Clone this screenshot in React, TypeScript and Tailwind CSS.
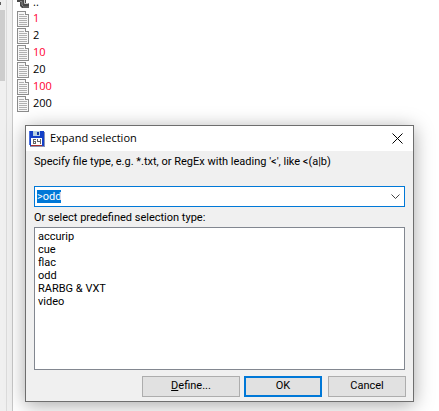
import React, { useEffect, useRef } from "react";

const files = [
  { name: "1", marked: true },
  { name: "2", marked: false },
  { name: "10", marked: true },
  { name: "20", marked: false },
  { name: "100", marked: true },
  { name: "200", marked: false },
];

const presets = ["accurip", "cue", "flac", "odd", "RARBG & VXT", "video"];

const FileIcon = () => (
  <svg width="12" height="16" viewBox="0 0 12 16" shapeRendering="crispEdges" aria-hidden="true">
    <path d="M0.5 0.5H8.5L11.5 3.5V15.5H0.5Z" fill="#f7f7f7" stroke="#8c8c8c" />
    <path d="M8.5 0.5V3.5H11.5" fill="#fff" stroke="#8c8c8c" />
    <path d="M2 3.5H7M2 5.5H10M2 7.5H10M2 9.5H10M2 11.5H10M2 13.5H10" stroke="#b0b0b0" />
  </svg>
);

// only the lower part of the arrow shows, the list is scrolled
const UpIcon = () => (
  <svg width="12" height="10" viewBox="0 0 12 10" aria-hidden="true">
    <path d="M0 0H9V3H12V8H5L3 6V2H0Z" fill="#484848" />
    <path d="M3 1.5H5V5L6.5 6.5" fill="none" stroke="#999" strokeWidth="0.8" />
    <path d="M7.5 0V3.5H11.5" fill="none" stroke="#c8c8c8" />
    <path d="M6 7H12" stroke="#777" />
  </svg>
);

const DiskIcon = () => (
  <svg width="16" height="16" viewBox="0 0 16 16" shapeRendering="crispEdges" aria-hidden="true">
    <path d="M0 0H14L15 1V15H1L0 14Z" fill="#1440c8" />
    <path d="M15 1V15H1" fill="none" stroke="#8c94b4" />
    <path d="M0 0H1V14H0Z" fill="#4a70e0" />
    <path d="M4 0H11V5H4Z" fill="#b8d0e0" />
    <path d="M8 1H10V4H8Z" fill="#1238a8" />
    <path d="M2 7H13V14H2Z" fill="#fff" />
    <path d="M2 14H13V15H2Z" fill="#a83030" />
    <path d="M7 8.5H4.5V12.5H6.5V10.5H5M8.5 8V10.5H11M11.5 8V13" fill="none" stroke="#666" />
  </svg>
);

const App = () => {
  const mask = useRef<HTMLInputElement>(null);

  useEffect(() => {
    mask.current?.focus();
    mask.current?.select();
  }, []);

  return (
    <div className="relative flex h-screen overflow-hidden bg-white font-[Roboto,'Liberation_Sans',sans-serif] text-[11px] text-black">
      <div className="flex w-[7px] shrink-0 flex-col border-r border-[#dcdcdc] bg-[#f0f0f0]">
        <div className="h-[10px] pt-0.5">
          <div className="h-[3px] w-px bg-[#606060]" />
        </div>
        <div className="mr-px h-[71px] bg-[#cdcdcd]" />
      </div>
      <div className="w-[6px] shrink-0 border-r border-[#c8c8c8] bg-[#f0f0f0]" />

      <ul className="grow pl-1 font-['Open_Sans','Noto_Sans',sans-serif] text-[11px]">
        <li className="flex h-[10px] items-end gap-1 leading-4">
          <UpIcon />
          <span>..</span>
        </li>
        {files.map((file) => (
          <li key={file.name} className="flex h-[17px] items-center gap-1">
            <FileIcon />
            <span className={file.marked ? "text-[#ff0030]" : "text-black"}>{file.name}</span>
          </li>
        ))}
      </ul>

      <form
        role="dialog"
        aria-labelledby="dialog-title"
        onSubmit={(e) => e.preventDefault()}
        className="absolute top-[125px] right-[25px] bottom-[9px] left-[25px] flex flex-col border border-[#6e6e6e] bg-[#f0f0f0] shadow-[0_3px_18px_rgba(0,0,0,0.35)]"
      >
        <header className="flex h-[25px] shrink-0 items-center gap-[5px] bg-white pr-2 pl-[3px]">
          <DiskIcon />
          <h1 id="dialog-title" className="grow font-['Open_Sans','Noto_Sans',sans-serif] text-[11px]">
            Expand selection
          </h1>
          <button type="button" aria-label="Close" className="p-0.5">
            <svg width="11" height="11" viewBox="0 0 11 11" aria-hidden="true">
              <path d="M0.5 0.5L10.5 10.5M10.5 0.5L0.5 10.5" stroke="#000" />
            </svg>
          </button>
        </header>

        <div className="flex grow flex-col px-2 pt-[3px]">
          <label htmlFor="mask" className="leading-4">
            Specify file type, e.g. *.txt, or RegEx with leading '&lt;', like &lt;(a|b)
          </label>
          <div className="mt-4 flex h-[21px] items-center border border-[#0078d7] bg-white pr-1 pl-0.5">
            <input
              id="mask"
              ref={mask}
              defaultValue=">odd"
              className="h-[13px] min-w-0 grow leading-[13px] outline-none selection:bg-[#0078d7] selection:text-white"
            />
            <button type="button" aria-label="Show history">
              <svg width="9" height="6" viewBox="0 0 9 6" aria-hidden="true">
                <path d="M0.5 0.5L4.5 4.5L8.5 0.5" fill="none" stroke="#444" />
              </svg>
            </button>
          </div>

          <label htmlFor="presets" className="mt-[3px] mb-px leading-4">
            Or select predefined selection type:
          </label>
          <select
            id="presets"
            size={6}
            className="min-h-0 grow overflow-hidden border border-[#828790] bg-white px-px pt-0.5 outline-none"
          >
            {presets.map((preset) => (
              <option key={preset} className="h-[13px] min-h-0 px-0.5 py-0 leading-[13px]">
                {preset}
              </option>
            ))}
          </select>

          <div className="-mr-px flex justify-end py-1.5 pb-1">
            <button type="button" className="mr-1 h-[21px] w-[98px] border border-[#adadad] bg-[#e1e1e1]">
              <u>D</u>efine...
            </button>
            <button type="submit" className="mr-1.5 h-[21px] w-[78px] border-2 border-[#0078d7] bg-[#e1e1e1]">
              OK
            </button>
            <button type="button" className="h-[21px] w-[78px] border border-[#adadad] bg-[#e1e1e1]">
              Cancel
            </button>
          </div>
        </div>
      </form>
    </div>
  );
};

export default App;
